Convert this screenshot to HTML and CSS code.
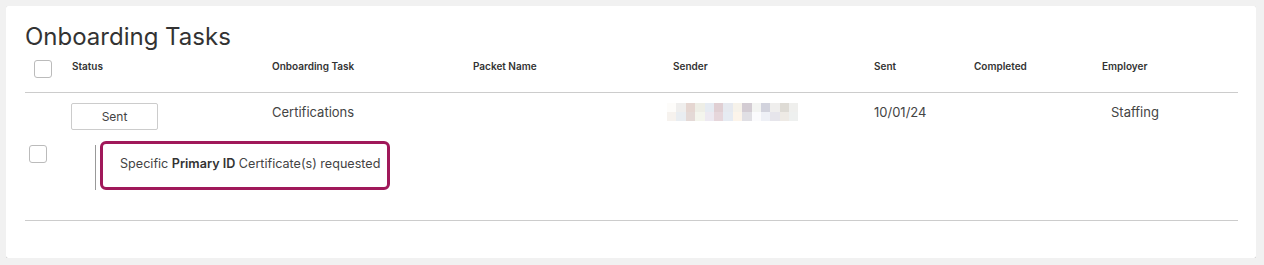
FILE: index.html
```html
<!DOCTYPE html>
<html lang="en">
<head>
    <meta charset="UTF-8">
    <meta name="viewport" content="width=device-width, initial-scale=1.0">
    <title>Onboarding Tasks</title>
    <link rel="stylesheet" href="styles.css">
</head>
<body>
    <div class="card">
        <h2 class="title">Onboarding Tasks</h2>

        <div class="task-row task-head">
            <div class="cell"><span class="check"></span></div>
            <div class="cell">Status</div>
            <div class="cell">Onboarding Task</div>
            <div class="cell">Packet Name</div>
            <div class="cell">Sender</div>
            <div class="cell">Sent</div>
            <div class="cell">Completed</div>
            <div class="cell">Employer</div>
        </div>

        <div class="task-body">
            <div class="task-row task-item">
                <div class="cell"></div>
                <div class="cell"><button class="status-btn">Sent</button></div>
                <div class="cell">Certifications</div>
                <div class="cell"></div>
                <div class="cell">
                    <!-- sender name is blurred in the source -->
                    <div class="blur">
                        <i style="background:#fdfcfa"></i><i style="background:#efeeed"></i><i style="background:#e5d6d1"></i><i style="background:#eeeee6"></i><i style="background:#e6ebf2"></i><i style="background:#e0cfd3"></i><i style="background:#e6e9ef"></i><i style="background:#f6f2ea"></i><i style="background:#d3ccd3"></i><i style="background:#f3f4f2"></i><i style="background:#d2d3dd"></i><i style="background:#efeeed"></i><i style="background:#dedbd5"></i><i style="background:#efefed"></i>
                        <i style="background:#f6f2ee"></i><i style="background:#e9edf1"></i><i style="background:#e4d9d6"></i><i style="background:#f4f5ed"></i><i style="background:#ede9f1"></i><i style="background:#e6d6db"></i><i style="background:#e6ebf2"></i><i style="background:#fcf4ea"></i><i style="background:#e0dfe4"></i><i style="background:#fbfbfd"></i><i style="background:#eef0f6"></i><i style="background:#e6e5eb"></i><i style="background:#eeeae5"></i><i style="background:#eef0ef"></i>
                    </div>
                </div>
                <div class="cell">10/01/24</div>
                <div class="cell"></div>
                <div class="cell employer">Staffing</div>
            </div>

            <div class="task-detail">
                <span class="check detail-check"></span>
                <div class="detail-rule"></div>
                <div class="note">Specific <b>Primary ID</b> Certificate(s) requested</div>
            </div>
        </div>
    </div>
</body>
</html>
```

FILE: styles.css
```css
body {
    font-family: Inter, "Open Sans", sans-serif;
    background-color: #f1f1f1;
    margin: 6px 8px 6px 6px;
    color: #444;
}

.card {
    background-color: #fff;
    box-shadow: 0 1px 3px rgba(0, 0, 0, 0.35);
    border-radius: 2px;
    padding: 18px 18px 37px 19px;
}

.title {
    margin: 0;
    font-size: 24px;
    line-height: 26px;
    font-weight: 400;
    color: #333;
}

.task-row {
    display: grid;
    grid-template-columns: 47px 200px 201px 200px 201px 100px 128px 136px;
}

.task-head {
    margin-top: 8px;
    height: 34px;
    font-size: 10px;
    line-height: 16px;
    font-weight: 600;
    color: #333;
    border-bottom: 1px solid #ccc;
}

.check {
    display: block;
    width: 16px;
    height: 16px;
    border: 1px solid #bbb;
    border-radius: 3px;
    margin: 2px 0 0 9px;
}

.task-body {
    padding-top: 10px;
    padding-bottom: 30px;
    border-bottom: 1px solid #ccc;
}

.task-item {
    font-size: 13px;
    line-height: 18px;
    color: #444;
}

.status-btn {
    display: block;
    width: 87px;
    height: 27px;
    margin-left: -1px;
    background: #fff;
    border: 1px solid #ccc;
    border-radius: 2px;
    font-family: inherit;
    font-size: 12px;
    color: #444;
}

.blur {
    display: grid;
    grid-template-columns: repeat(14, 9.4px);
    grid-auto-rows: 9px;
    margin-left: -6px;
}

.employer {
    padding-left: 9px;
}

.task-detail {
    display: flex;
    align-items: flex-start;
    margin-top: 11px;
}

.detail-check {
    margin: 4px 0 0 4px;
}

.detail-rule {
    width: 1px;
    height: 45px;
    margin: 4px 0 0 48px;
    background-color: #999;
}

.note {
    margin-left: 4px;
    width: 267px;
    height: 43px;
    border: 3px solid #a0185a;
    border-radius: 6px;
    padding-left: 17px;
    font-size: 12.6px;
    line-height: 40px;
    white-space: nowrap;
    color: #444;
}

.note b {
    font-weight: 600;
    color: #333;
}
```
